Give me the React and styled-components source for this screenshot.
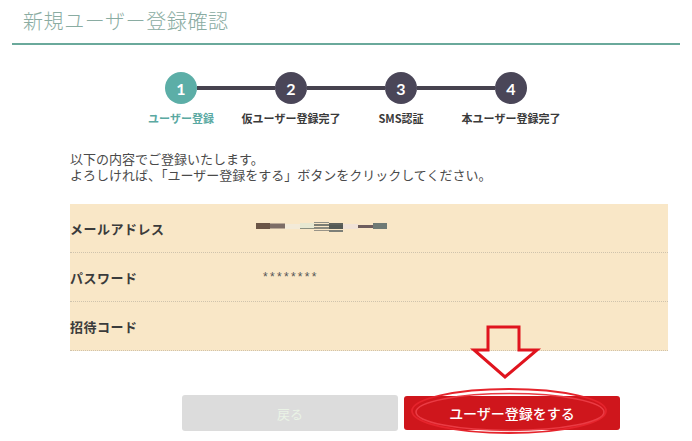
import React from "react";
import styled, { createGlobalStyle } from "styled-components";

const GlobalStyle = createGlobalStyle`
  html, body { margin: 0; padding: 0; background: #ffffff; }
  body { font-family: "Noto Sans CJK JP", "Noto Sans", sans-serif; }
`;

const Page = styled.div`
  position: relative;
  width: 692px;
  height: 441px;
  overflow: hidden;
  background: #fff;
`;

const Header = styled.header`
  margin: 0 12px;
  padding: 7px 0 8px 11px;
  border-bottom: 2px solid #6aa99b;
`;

const Title = styled.h1`
  margin: 0;
  font-size: 20px;
  line-height: 28px;
  font-weight: 300;
  letter-spacing: 0.6px;
  color: #8aaca2;
`;

const Steps = styled.div`
  margin-top: 27px;
`;

const Track = styled.div`
  display: flex;
  justify-content: center;
  align-items: center;
`;

const Circle = styled.div`
  width: 32px;
  height: 32px;
  border-radius: 50%;
  background: ${(p) => (p.$active ? "#5caea7" : "#4a4658")};
  color: #fff;
  display: flex;
  align-items: center;
  justify-content: center;
  font-family: "Lato", "Noto Sans", sans-serif;
  font-weight: 700;
  font-size: 16px;
`;

const Connector = styled.div`
  width: 78px;
  height: 4px;
  background: #46424f;
`;

const Labels = styled.div`
  display: grid;
  grid-template-columns: repeat(4, 110px);
  justify-content: center;
  margin-top: 6px;
`;

const StepLabel = styled.div`
  text-align: center;
  font-size: 11px;
  line-height: 16px;
  font-weight: 700;
  color: ${(p) => (p.$active ? "#5aa9a2" : "#3a3a3a")};
  white-space: nowrap;
`;

const Intro = styled.p`
  margin: 25px 0 0 70px;
  font-size: 13px;
  line-height: 16px;
  color: #4a4a4a;
`;

const Table = styled.div`
  margin: 21px 24px 0 70px;
  background: #f9e7c7;
`;

const Row = styled.div`
  display: grid;
  grid-template-columns: 186px 1fr;
  align-items: center;
  height: 48px;
  border-bottom: 1px dotted #cfc3ad;
`;

const Label = styled.div`
  font-size: 13px;
  font-weight: 700;
  letter-spacing: 0.5px;
  color: #3b3b3b;
`;

const Value = styled.div`
  display: flex;
  align-items: center;
  font-size: 12px;
  color: #555;
`;

const Masked = styled.span`
  font-family: "Liberation Sans", Arial, sans-serif;
  font-size: 12px;
  line-height: 14px;
  letter-spacing: 2.3px;
  padding-left: 7px;
  color: #555;
`;

const Buttons = styled.div`
  display: flex;
  align-items: flex-start;
  gap: 6px;
  margin-top: 44px;
  padding-left: 182px;
`;

const Button = styled.button`
  width: 216px;
  height: ${(p) => (p.$primary ? "34px" : "36px")};
  margin-top: ${(p) => (p.$primary ? "1px" : "0")};
  border: none;
  border-radius: 3px;
  font-family: "Noto Sans CJK JP", sans-serif;
  font-size: ${(p) => (p.$primary ? "14px" : "13px")};
  font-weight: ${(p) => (p.$primary ? 500 : 400)};
  background: ${(p) => (p.$primary ? "#cf161c" : "#dcdcdc")};
  color: ${(p) => (p.$primary ? "#ffffff" : "#eaf3e6")};
  cursor: pointer;
`;

const Overlay = styled.svg`
  position: absolute;
  left: 0;
  top: 0;
  pointer-events: none;
`;

const EmailBlur = () => (
  <svg width="134" height="12" viewBox="0 0 134 12">
    <rect x="0" y="1" width="14" height="6" fill="#6b5546" />
    <rect x="14" y="1.5" width="15" height="5" fill="#7d6d66" />
    <rect x="29" y="2" width="15" height="5" fill="#f3ead8" />
    <rect x="44" y="1" width="14" height="6" fill="#e7e8d1" />
    <rect x="44" y="6" width="14" height="1" fill="#8a8f80" />
    <rect x="58" y="0" width="15" height="1" fill="#8f8f86" />
    <rect x="58" y="2" width="15" height="2" fill="#7c7e74" />
    <rect x="58" y="5" width="15" height="2" fill="#8b8b80" />
    <rect x="58" y="8" width="15" height="1" fill="#999488" />
    <rect x="73" y="1" width="14" height="2" fill="#5f625c" />
    <rect x="73" y="3" width="14" height="4" fill="#555a55" />
    <rect x="73" y="8" width="14" height="2" fill="#7d7f78" />
    <rect x="87" y="2" width="15" height="5" fill="#f0e2d7" />
    <rect x="102" y="3" width="15" height="3" fill="#6e5d5d" />
    <rect x="117" y="1" width="14" height="6" fill="#6f7a75" />
  </svg>
);

const steps = ["ユーザー登録", "仮ユーザー登録完了", "SMS認証", "本ユーザー登録完了"];

export default function App() {
  return (
    <Page>
      <GlobalStyle />
      <Header>
        <Title>新規ユーザー登録確認</Title>
      </Header>

      <Steps>
        <Track>
          {steps.map((s, i) => (
            <React.Fragment key={s}>
              {i > 0 && <Connector />}
              <Circle $active={i === 0}>{i + 1}</Circle>
            </React.Fragment>
          ))}
        </Track>
        <Labels>
          {steps.map((s, i) => (
            <StepLabel key={s} $active={i === 0}>
              {s}
            </StepLabel>
          ))}
        </Labels>
      </Steps>

      <Intro>
        以下の内容でご登録いたします。
        <br />
        よろしければ、「ユーザー登録をする」ボタンをクリックしてください。
      </Intro>

      <Table>
        <Row>
          <Label>メールアドレス</Label>
          <Value>
            <EmailBlur />
          </Value>
        </Row>
        <Row>
          <Label>パスワード</Label>
          <Value>
            <Masked>********</Masked>
          </Value>
        </Row>
        <Row>
          <Label>招待コード</Label>
          <Value />
        </Row>
      </Table>

      <Buttons>
        <Button type="button">戻る</Button>
        <Button type="button" $primary>
          ユーザー登録をする
        </Button>
      </Buttons>

      <Overlay width="692" height="441" viewBox="0 0 692 441">
        <path
          d="M488 327 H519 V350 H537 L505 377 L474 350 H488 Z"
          fill="none"
          stroke="#e0141e"
          strokeWidth="3"
          strokeLinejoin="miter"
        />
        <ellipse cx="509" cy="411" rx="97" ry="22" fill="none" stroke="#e5242c" strokeWidth="1.8" />
        <ellipse cx="510" cy="412" rx="94" ry="18.5" fill="none" stroke="#ea3b44" strokeWidth="1.6" />
      </Overlay>
    </Page>
  );
}
